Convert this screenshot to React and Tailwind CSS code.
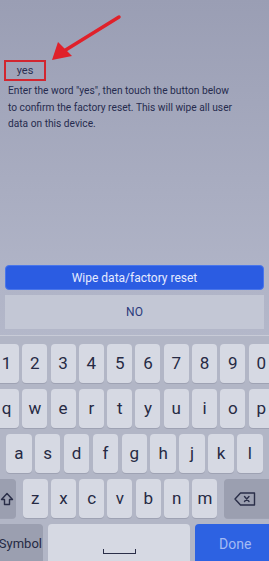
import React from 'react';

const font = { fontFamily: 'Roboto, "Noto Sans", sans-serif' };

const Key = ({ children, className = '', size = 'text-[17px]', tone = 'bg-[#d6d9e3]', w = 'w-[25px]', h = 'h-[39px]' }) => (
  <div
    className={`${h} ${w} ${size} ${tone} shrink-0 rounded-[4px] flex items-center text-[#262a44] shadow-[0_1px_0_#9ea2b3] ${className}`}
  >
    {children}
  </div>
);

const ShiftIcon = () => (
  <svg width="14" height="14" viewBox="0 0 14 14" fill="none" stroke="#2a2e48" strokeWidth="1.4" strokeLinejoin="round">
    <path d="M7 1.5 L12.5 7.5 H9.5 V12.5 H4.5 V7.5 H1.5 Z" />
  </svg>
);

const BackspaceIcon = () => (
  <svg width="22" height="14" viewBox="0 0 22 14" fill="none" stroke="#2a2e48" strokeWidth="1.4" strokeLinejoin="round">
    <path d="M6.5 1 H20.5 V13 H6.5 L1 7 Z" />
    <path d="M10.5 4.5 L15 9.5 M15 4.5 L10.5 9.5" strokeLinecap="round" />
  </svg>
);

const dark = 'bg-[#9b9fb0]';

export default function App() {
  return (
    <div
      className="relative w-[269px] h-[561px] overflow-hidden bg-gradient-to-b from-[#9a9eb4] via-[#b0b4c7] to-[#c2c6d4]"
      style={font}
    >
      {/* Arrow pointing at the input */}
      <svg className="absolute left-0 top-0" width="130" height="70" viewBox="0 0 130 70">
        <line x1="119" y1="17" x2="64" y2="51" stroke="#e0212a" strokeWidth="3.5" strokeLinecap="round" />
        <polygon points="52,60 58,42 72,56" fill="#e0212a" />
      </svg>

      {/* Input + message */}
      <div className="pt-[60px] px-[4px]">
        <div className="w-[42px] h-[21px] border-2 border-[#d22630] flex items-center justify-center text-[11px] text-[#2a2e50] leading-none">
          yes
        </div>
        <p className="mt-[2px] pl-[4px] text-[10.2px] leading-[16.5px] text-[#262b4e] whitespace-nowrap">
          Enter the word "yes", then touch the button below
          <br />
          to confirm the factory reset. This will wipe all user
          <br />
          data on this device.
        </p>
      </div>

      {/* Actions */}
      <div className="absolute left-0 right-0 top-[265px] px-[5px]">
        <div className="h-[25px] rounded-[4px] bg-[#2b5ce2] border border-[#4a76ea] flex items-center justify-center text-[12px] text-[#e6ebff]">
          Wipe data/factory reset
        </div>
        <div className="mt-[5px] h-[34px] bg-[#c3c7d5] flex items-center justify-center text-[12px] text-[#2b3a7c]">
          NO
        </div>
      </div>

      {/* Keyboard */}
      <div className="absolute left-0 right-0 top-[335px] bottom-0 bg-[#b2b6c6] border-t border-[#c8cbd7] pt-[8px] flex flex-col gap-[6px]">
        <div className="flex gap-[3.3px] ml-[-6px]">
          {['1', '2', '3', '4', '5', '6', '7', '8', '9', '0'].map((k) => (
            <Key key={k} className="justify-center">{k}</Key>
          ))}
        </div>
        <div className="flex gap-[3.3px] ml-[-6px]">
          {['q', 'w', 'e', 'r', 't', 'y', 'u', 'i', 'o', 'p'].map((k) => (
            <Key key={k} className="justify-center">{k}</Key>
          ))}
        </div>
        <div className="flex gap-[3.4px] ml-[6px]">
          {['a', 's', 'd', 'f', 'g', 'h', 'j', 'k', 'l'].map((k) => (
            <Key key={k} w="w-[25.5px]" className="justify-center">{k}</Key>
          ))}
        </div>
        <div className="flex gap-[3.3px] ml-[-14px]">
          <Key w="w-[30px]" tone={dark} className="justify-end pr-[2px]">
            <ShiftIcon />
          </Key>
          <div className="w-[1px]" />
          {['z', 'x', 'c', 'v', 'b', 'n', 'm'].map((k) => (
            <Key key={k} className="justify-center">{k}</Key>
          ))}
          <div className="w-[2px]" />
          <Key w="w-[54px]" tone={dark} className="justify-start pl-[10px]">
            <BackspaceIcon />
          </Key>
        </div>
        <div className="flex gap-[5px] ml-[-20px]">
          <Key w="w-[63px]" h="h-[40px]" tone={dark} size="text-[13px]" className="justify-end pr-[1px]">
            Symbol
          </Key>
          <Key w="w-[142px]" h="h-[40px]" className="justify-center items-end pb-[10px]">
            <div className="w-[33px] h-[5px] border-b-[1.5px] border-l-[1.5px] border-r-[1.5px] border-[#2a2e48]" />
          </Key>
          <Key w="w-[80px]" h="h-[40px]" tone="bg-[#2d62e2]" size="text-[14px]" className="justify-start pl-[24px]">
            <span className="text-[#a3baf3]">Done</span>
          </Key>
        </div>
      </div>
    </div>
  );
}
